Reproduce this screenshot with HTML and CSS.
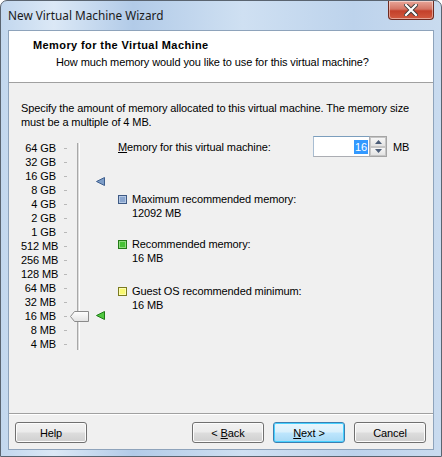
FILE: index.html
```html
<!DOCTYPE html>
<html>
<head>
<meta charset="utf-8">
<link rel="stylesheet" href="styles.css">
</head>
<body>
<div class="window">
  <div class="titlebar">
    <span class="title">New Virtual Machine Wizard</span>
    <button class="close" aria-label="Close">
      <svg width="14" height="12" viewBox="0 0 14 12"><path d="M2 1 L12 11 M12 1 L2 11" stroke="#3a3a3a" stroke-width="4" stroke-linecap="square"/><path d="M2 1 L12 11 M12 1 L2 11" stroke="#fff" stroke-width="2.2" stroke-linecap="square"/></svg>
    </button>
  </div>
  <div class="client">
    <div class="header">
      <div class="h-title">Memory for the Virtual Machine</div>
      <div class="h-sub">How much memory would you like to use for this virtual machine?</div>
    </div>
    <div class="body">
      <p class="intro">Specify the amount of memory allocated to this virtual machine. The memory size must be a multiple of 4 MB.</p>
      <div class="main">
        <div class="scale">
          <ul class="labels">
            <li>64 GB</li><li>32 GB</li><li>16 GB</li><li>8 GB</li><li>4 GB</li><li>2 GB</li><li>1 GB</li><li>512 MB</li><li>256 MB</li><li>128 MB</li><li>64 MB</li><li>32 MB</li><li>16 MB</li><li>8 MB</li><li>4 MB</li>
          </ul>
          <div class="ticks">
            <i></i><i></i><i></i><i></i><i></i><i></i><i></i><i></i><i></i><i></i><i></i><i></i><i></i><i></i><i></i>
          </div>
          <div class="track">
            <svg class="thumb" width="19" height="11" viewBox="0 0 19 11"><path d="M0.5 5.5 L4.5 0.5 H18.5 V10.5 H4.5 Z" fill="url(#tg)" stroke="#8a8a8a"/><defs><linearGradient id="tg" x1="0" y1="0" x2="0" y2="1"><stop offset="0" stop-color="#ffffff"/><stop offset="1" stop-color="#e2e2e2"/></linearGradient></defs></svg>
          </div>
          <div class="markers">
            <svg class="mk mk-max" width="9" height="9" viewBox="0 0 9 9"><path d="M0.5 4.5 L8.5 0.5 V8.5 Z" fill="#7d9dc7" stroke="#3e5f8e"/></svg>
            <svg class="mk mk-rec" width="9" height="9" viewBox="0 0 9 9"><path d="M0.5 4.5 L8.5 0.5 V8.5 Z" fill="#4fc83f" stroke="#1f7a17"/></svg>
          </div>
        </div>
        <div class="right">
          <div class="mem-row">
            <label class="mem-label"><u>M</u>emory for this virtual machine:</label>
            <div class="spin">
              <div class="spin-input"><span class="sel">16</span></div>
              <div class="spin-btns">
                <span class="sb"><svg width="7" height="4" viewBox="0 0 7 4"><path d="M0 4 L3.5 0 L7 4 Z" fill="#4b5d78"/></svg></span>
                <span class="sb"><svg width="7" height="4" viewBox="0 0 7 4"><path d="M0 0 L3.5 4 L7 0 Z" fill="#4b5d78"/></svg></span>
              </div>
            </div>
            <span class="unit">MB</span>
          </div>
          <div class="legend l-max">
            <span class="sq sq-blue"></span>
            <div><div>Maximum recommended memory:</div><div>12092 MB</div></div>
          </div>
          <div class="legend l-rec">
            <span class="sq sq-green"></span>
            <div><div>Recommended memory:</div><div>16 MB</div></div>
          </div>
          <div class="legend l-guest">
            <span class="sq sq-yellow"></span>
            <div><div>Guest OS recommended minimum:</div><div>16 MB</div></div>
          </div>
        </div>
      </div>
    </div>
    <div class="footer">
      <button class="btn">Help</button>
      <div class="spacer"></div>
      <button class="btn">&lt; <u>B</u>ack</button>
      <button class="btn btn-default"><u>N</u>ext &gt;</button>
      <button class="btn">Cancel</button>
    </div>
  </div>
</div>
</body>
</html>
```

FILE: styles.css
```css
* { box-sizing: border-box; }
html, body { margin: 0; padding: 0; }
body {
  width: 442px;
  height: 457px;
  background: #ffffff;
  font-family: "Liberation Sans", Arial, sans-serif;
  font-size: 11px;
  letter-spacing: -0.1px;
  color: #000;
}
.window {
  width: 442px;
  height: 457px;
  border: 1px solid #5a6470;
  border-radius: 7px 7px 0 0;
  background: linear-gradient(90deg, #c2d7ee 0%, #dbe8f6 12%, #b2cbe8 30%, #cfe0f2 55%, #bdd3ec 80%, #c9dbef 100%);
  display: flex;
  flex-direction: column;
  padding: 0 7px 6px 7px;
}
.titlebar {
  height: 29px;
  display: flex;
  align-items: flex-start;
}
.title {
  font-family: "Noto Sans", "Open Sans", sans-serif;
  font-size: 11.8px;
  letter-spacing: 0;
  color: #1a1a1a;
  margin-top: 6px;
}
.close {
  margin-left: auto;
  width: 46px;
  height: 19px;
  border: 1px solid #6e2a20;
  border-top: none;
  border-radius: 0 0 4px 4px;
  background: linear-gradient(180deg, #e8a699 0%, #d47565 45%, #c4402a 55%, #d25a40 100%);
  box-shadow: inset 0 0 0 1px rgba(255,255,255,0.45);
  display: flex;
  align-items: center;
  justify-content: center;
  padding: 0;
}
.client {
  flex: 1;
  background: #f0f0f0;
  border: 1px solid #8ea3bb;
  display: flex;
  flex-direction: column;
}
.header {
  background: #fff;
  height: 52px;
  border-bottom: 1px solid #a0a0a0;
  padding: 7px 0 0 24px;
}
.h-title {
  font-weight: bold;
  line-height: 14px;
  letter-spacing: 0.4px;
}
.h-sub {
  margin: 3px 0 0 23px;
  line-height: 14px;
}
.body {
  flex: 1;
  padding: 0 12px;
}
.intro {
  margin: 18px 0 0 0;
  line-height: 14px;
}
.main {
  display: flex;
  margin-top: 12px;
}
.scale {
  display: flex;
  width: 97px;
  position: relative;
}
.labels {
  list-style: none;
  margin: 0;
  padding: 0;
  width: 35px;
  text-align: right;
}
.labels li {
  height: 14px;
  line-height: 14px;
  white-space: nowrap;
}
.ticks {
  margin-left: 8px;
  padding-top: 7px;
}
.ticks i {
  display: block;
  width: 3px;
  height: 14px;
  border-top: 1px solid #b8b8b8;
}
.track {
  margin-left: 10px;
  margin-top: 2px;
  width: 3px;
  height: 207px;
  border-left: 1px solid #a8a8a8;
  border-right: 1px solid #ffffff;
  background: #dcdcdc;
  position: relative;
}
.thumb {
  position: absolute;
  left: -8px;
  top: 168px;
}
.markers {
  position: relative;
  margin-left: 16px;
  width: 9px;
}
.mk { position: absolute; left: 0; }
.mk-max { top: 36px; }
.mk-rec { top: 170px; }
.right {
  flex: 1;
}
.mem-row {
  display: flex;
  align-items: center;
  height: 21px;
  margin-top: -5px;
}
.mem-label {
  width: 195px;
}
.spin {
  display: flex;
  height: 21px;
}
.spin-input {
  width: 57px;
  height: 21px;
  border: 1px solid #abadb3;
  border-top-color: #7b9ebd;
  border-left-color: #a8bdd2;
  background: #fff;
  display: flex;
  align-items: center;
  justify-content: flex-end;
  padding-right: 1px;
}
.sel {
  background: #3399ff;
  color: #fff;
  line-height: 14px;
  padding: 0 1px;
}
.spin-btns {
  display: flex;
  flex-direction: column;
  width: 17px;
  border: 1px solid #a5a5a5;
  border-left: none;
}
.sb {
  flex: 1;
  display: flex;
  align-items: center;
  justify-content: center;
  background: linear-gradient(180deg, #f7f7f7, #e3e3e3);
  border: 1px solid #c6c6c6;
}
.unit {
  margin-left: 6px;
}
.legend {
  display: flex;
  align-items: flex-start;
  line-height: 14px;
}
.legend > div { padding-left: 5px; }
.l-max { margin-top: 35px; }
.l-rec { margin-top: 17px; }
.l-guest { margin-top: 19px; }
.sq {
  width: 9px;
  height: 9px;
  margin-top: 3px;
  border: 1px solid #404040;
}
.sq-blue { background: #8aa6cf; border-color: #3e5a85; box-shadow: inset 0 0 0 1px #b4c8e4; }
.sq-green { background: #46c236; border-color: #237a17; box-shadow: inset 0 0 0 1px #8ddc7e; }
.sq-yellow { background: #f8f870; border-color: #7a7a20; box-shadow: inset 0 0 0 1px #fdfdb0; }
.footer {
  height: 36px;
  border-top: 1px solid #a0a0a0;
  box-shadow: inset 0 1px 0 #ffffff;
  display: flex;
  align-items: flex-start;
  padding: 8px 7px 0 6px;
  gap: 9px;
}
.spacer { flex: 1; }
.btn {
  width: 72px;
  height: 21px;
  font-family: "Liberation Sans", Arial, sans-serif;
  font-size: 11px;
  letter-spacing: -0.1px;
  color: #000;
  border: 1px solid #707070;
  border-radius: 3px;
  background: linear-gradient(180deg, #f2f2f2 0%, #ebebeb 48%, #dddddd 52%, #cfcfcf 100%);
  box-shadow: inset 0 0 0 1px #fcfcfc;
  padding: 0;
}
.btn-default {
  border-color: #3c7fb1;
  background: linear-gradient(180deg, #eaf6fd 0%, #d9f0fc 48%, #bee6fd 52%, #a7d9f5 100%);
  box-shadow: inset 0 0 0 1px #48d1ff;
}
```
